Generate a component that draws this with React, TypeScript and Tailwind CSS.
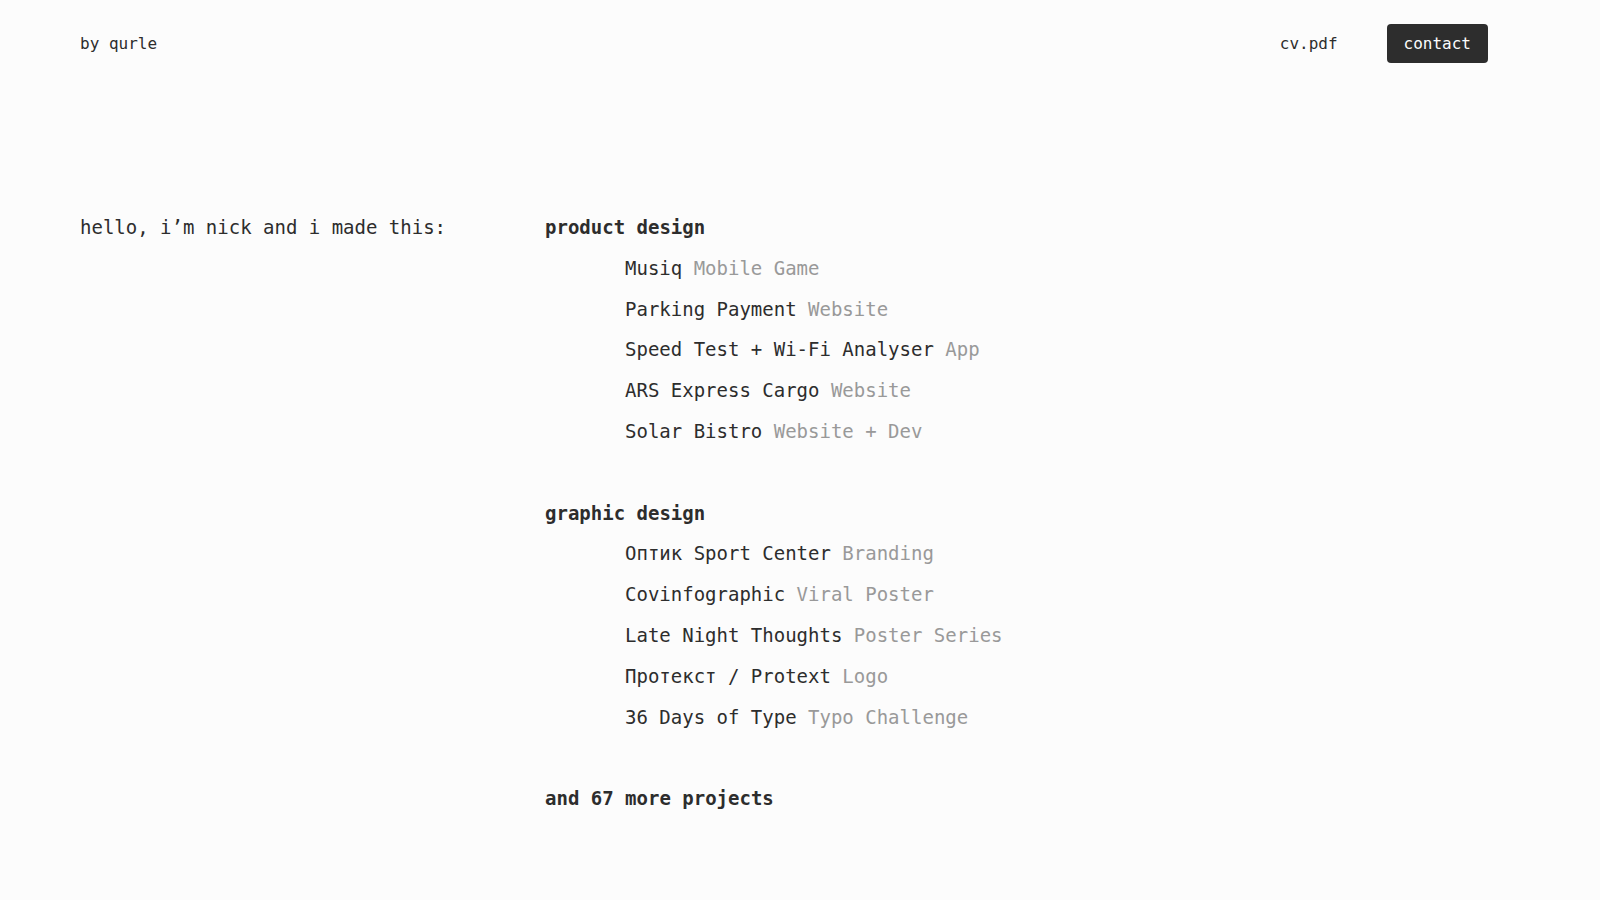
const SECTIONS = [
  {
    title: "product design",
    items: [
      ["Musiq", "Mobile Game"],
      ["Parking Payment", "Website"],
      ["Speed Test + Wi-Fi Analyser", "App"],
      ["ARS Express Cargo", "Website"],
      ["Solar Bistro", "Website + Dev"],
    ],
  },
  {
    title: "graphic design",
    items: [
      ["Оптик Sport Center", "Branding"],
      ["Covinfographic", "Viral Poster"],
      ["Late Night Thoughts", "Poster Series"],
      ["Протекст / Protext", "Logo"],
      ["36 Days of Type", "Typo Challenge"],
    ],
  },
];

export default function App() {
  return (
    <div className="min-h-screen bg-[#fcfcfc] text-[#2d2d2d] font-['DejaVu_Sans_Mono',monospace]">
      <header className="flex items-center justify-between pl-20 pr-[112px] pt-6">
        <a className="text-[16px] leading-[39px]">by qurle</a>
        <nav className="flex items-center gap-[49px] text-[16px]">
          <a className="leading-[39px]">cv.pdf</a>
          <button className="h-[39px] rounded bg-[#2d2d2d] px-[17px] text-[#fcfcfc]">
            contact
          </button>
        </nav>
      </header>

      <main className="mt-[144px] flex pl-20 text-[19px] leading-[40.8px]">
        <p className="w-[465px] shrink-0">hello, i’m nick and i made this:</p>
        <div>
          {SECTIONS.map((s) => (
            <section key={s.title} className="mb-[40.8px]">
              <h2 className="font-bold">{s.title}</h2>
              <ul className="pl-20">
                {s.items.map(([name, kind]) => (
                  <li key={name}>
                    {name} <span className="text-[#999999]">{kind}</span>
                  </li>
                ))}
              </ul>
            </section>
          ))}
          <p className="font-bold">and 67 more projects</p>
        </div>
      </main>
    </div>
  );
}
